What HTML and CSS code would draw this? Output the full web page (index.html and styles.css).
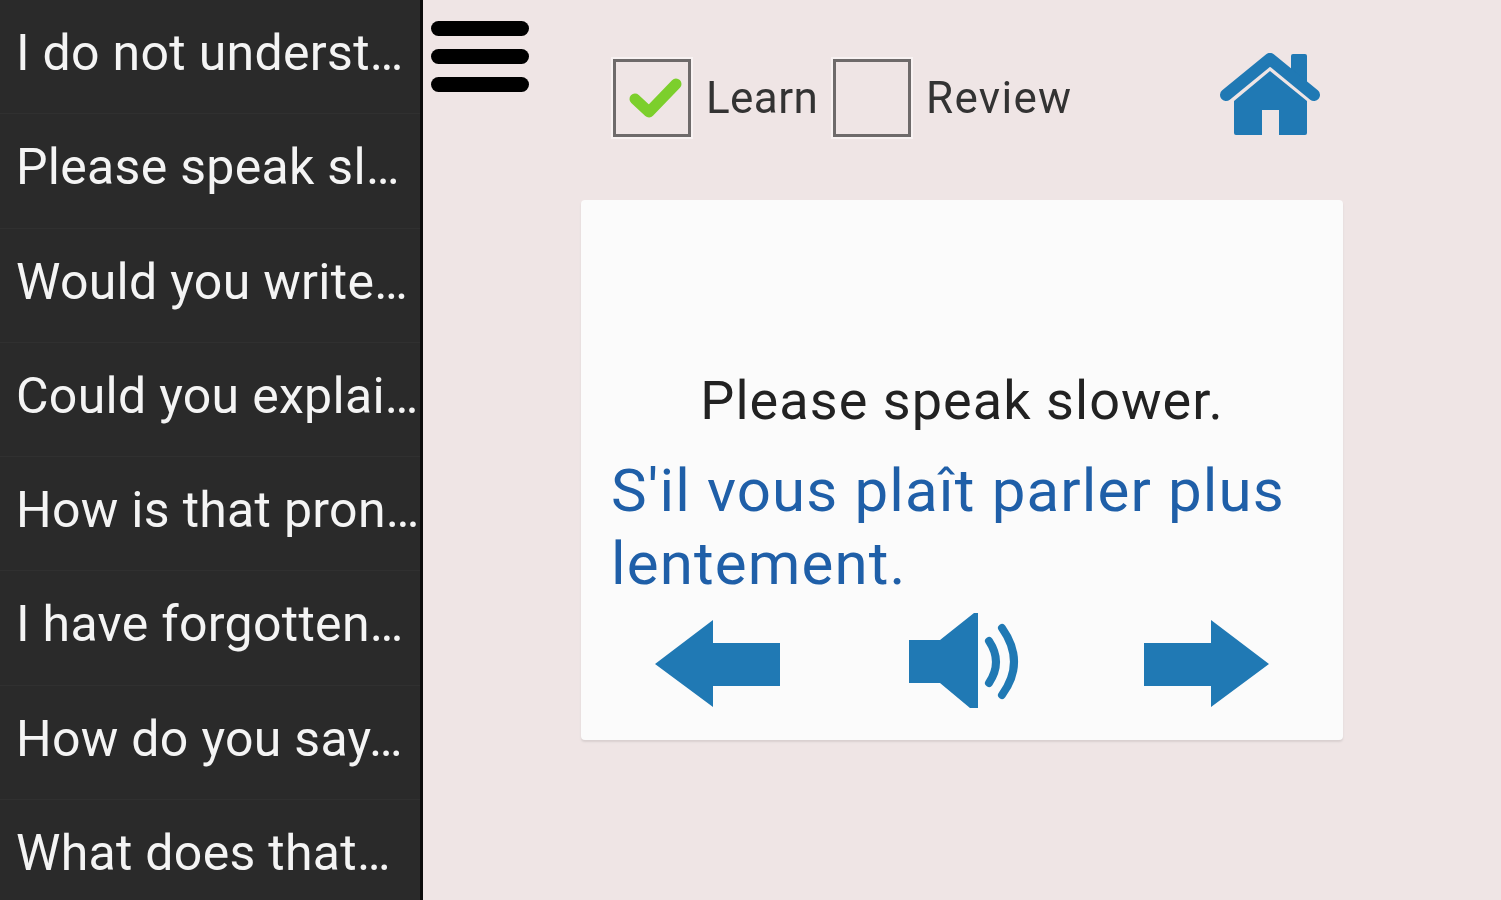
FILE: index.html

```html
<!DOCTYPE html>
<html lang="en">
<head>
  <meta charset="UTF-8">
  <meta name="viewport" content="width=device-width, initial-scale=1">
  <title>Phrases</title>
  <link rel="stylesheet" href="styles.css">
</head>
<body>
  <div class="sidebar">
    <div class="row">I do not underst…</div>
    <div class="row">Please speak sl…</div>
    <div class="row">Would you write…</div>
    <div class="row">Could you explai…</div>
    <div class="row">How is that pron…</div>
    <div class="row">I have forgotten…</div>
    <div class="row">How do you say…</div>
    <div class="row">What does that…</div>
  </div>

  <div class="menu">
    <span></span>
    <span></span>
    <span></span>
  </div>

  <div class="content">
    <div class="toolbar">
      <div class="check">
        <svg width="72" height="72" viewBox="0 0 72 72">
          <path d="M19 37 L33 50 L60 22" fill="none" stroke="#7ccf2c" stroke-width="11" stroke-linejoin="round" stroke-linecap="round"/>
        </svg>
      </div>
      <span class="label learn">Learn</span>
      <div class="check"></div>
      <span class="label review">Review</span>
      <svg class="home" width="104" height="88" viewBox="0 0 104 88">
        <path d="M73 6 Q73 4 75 4 H87 Q89 4 89 6 V40 L73 30 Z" fill="#2079b4"/>
        <path d="M8 45 L52 9 L96 45" fill="none" stroke="#2079b4" stroke-width="12" stroke-linecap="round" stroke-linejoin="round"/>
        <path d="M52 21 L89 51 V83 Q89 85 87 85 H61 V60 H44 V85 H18 Q16 85 16 83 V51 Z" fill="#2079b4"/>
      </svg>
    </div>

    <div class="card">
      <p class="phrase">Please speak slower.</p>
      <p class="translation">S'il vous plaît parler plus lentement.</p>
      <div class="controls">
        <svg width="126" height="88" viewBox="0 0 126 88">
          <path d="M0 44 L58 0 V23 H125 V66 H58 V87 Z" fill="#2079b4"/>
        </svg>
        <svg class="speaker" width="112" height="97" viewBox="0 0 112 97">
          <path d="M1 28 H32 L66 1 H70 V96 H62 L32 71 H1 Z" fill="#2079b4"/>
          <path d="M81 29 Q95 50 81 71" fill="none" stroke="#2079b4" stroke-width="8" stroke-linecap="round"/>
          <path d="M94 16 Q118 50 94 83" fill="none" stroke="#2079b4" stroke-width="8" stroke-linecap="round"/>
        </svg>
        <svg width="126" height="88" viewBox="0 0 126 88">
          <path d="M125 44 L67 0 V23 H0 V66 H67 V87 Z" fill="#2079b4"/>
        </svg>
      </div>
    </div>
  </div>
</body>
</html>
```

FILE: styles.css

```css
html, body {
  height: 100%;
}
body {
  margin: 0;
  display: flex;
  height: 900px;
  overflow: hidden;
  background: #efe5e5;
  font-family: Roboto, "Liberation Sans", sans-serif;
}
/* the reference is a soft upscale, so everything gets a little blur */
.sidebar, .menu, .toolbar, .card {
  filter: blur(0.6px);
}
.sidebar {
  box-sizing: border-box;
  width: 423px;
  height: 900px;
  flex: none;
  overflow: hidden;
  background: #2a2a2a;
  border-right: 3px solid #0c0c0c;
}
.row {
  height: 113.25px;
  line-height: 107px;
  padding-left: 16px;
  font-size: 50px;
  letter-spacing: 0.3px;
  white-space: nowrap;
  color: #f4f4f4;
  border-bottom: 1px solid #303030;
}
.menu {
  flex: none;
  display: flex;
  flex-direction: column;
  gap: 13px;
  width: 98px;
  margin: 21px 0 0 8px;
}
.menu span {
  height: 15px;
  background: #000;
  border-radius: 8px;
}
.content {
  flex: none;
  width: 762px;
  margin-left: 52px;
}
.toolbar {
  display: flex;
  align-items: center;
  height: 78px;
  margin: 59px 0 63px;
  padding-left: 32px;
}
.check {
  box-sizing: border-box;
  flex: none;
  width: 78px;
  height: 78px;
  border: 3px solid #6e6a6a;
  box-shadow: 0 0 0 2px #f8f2f2;
}
.label {
  margin-left: 15px;
  font-size: 44px;
  color: #333;
}
.learn {
  width: 127px;
  letter-spacing: 0.4px;
}
.review {
  letter-spacing: 1.3px;
}
.home {
  flex: none;
  margin: -8px 21px 0 auto;
}
.card {
  box-sizing: border-box;
  height: 540px;
  padding: 170px 30px 0;
  background: #fbfbfb;
  border-radius: 4px;
  box-shadow: 0 2px 2px #d9d0d0;
}
.phrase {
  margin: 0;
  font-size: 54px;
  letter-spacing: 1.05px;
  line-height: 62px;
  text-align: center;
  color: #222;
}
.translation {
  margin: 22px 0 0;
  font-size: 60px;
  letter-spacing: 1.15px;
  line-height: 73px;
  color: #1f5fa8;
}
.controls {
  display: flex;
  justify-content: space-between;
  align-items: center;
  margin-top: 12px;
  padding: 0 43px 0 44px;
}
.speaker {
  margin: 0 0 7px 3px;
}
```
